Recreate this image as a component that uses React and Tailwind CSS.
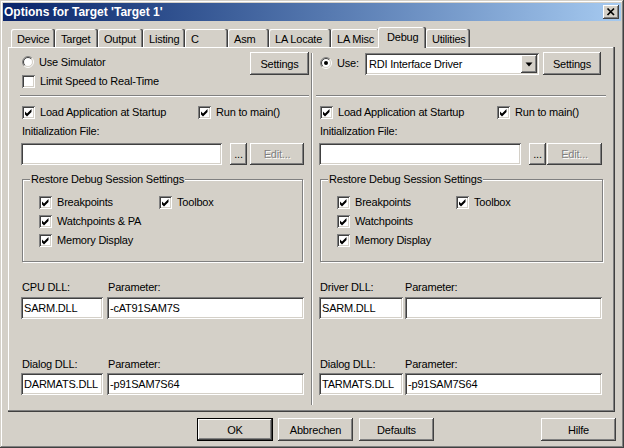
import React from "react";

// Win2000-style 3D edges
const raised =
  "bg-[#d4d0c8] shadow-[inset_-1px_-1px_#404040,inset_1px_1px_#ffffff,inset_-2px_-2px_#808080,inset_2px_2px_#d4d0c8]";
const sunken =
  "shadow-[inset_1px_1px_#808080,inset_-1px_-1px_#ffffff,inset_2px_2px_#404040,inset_-2px_-2px_#d4d0c8]";

function Button({ children, className = "", disabled = false }) {
  return (
    <div className={`${raised} flex items-center justify-center shrink-0 ${className}`}>
      {disabled ? (
        <span className="text-[#808080] [text-shadow:1px_1px_0_#ffffff]">{children}</span>
      ) : (
        children
      )}
    </div>
  );
}

function CheckBox({ label, checked = true, className = "" }) {
  return (
    <div className={`flex items-center h-[16px] ${className}`}>
      <span className={`w-[13px] h-[13px] shrink-0 bg-white ${sunken}`}>
        {checked && (
          <svg width="13" height="13" viewBox="0 0 13 13">
            <path d="M3 5.5 5 7.5 9.5 3v3L5 10.5 3 8.5z" fill="#000" />
          </svg>
        )}
      </span>
      <span className="ml-[5px] whitespace-nowrap">{label}</span>
    </div>
  );
}

function Radio({ checked = false }) {
  return (
    <svg width="12" height="12" viewBox="0 0 12 12" className="shrink-0">
      <circle cx="6" cy="6" r="4.5" fill="#fff" />
      <path d="M2.111 9.889A5.5 5.5 0 0 1 9.889 2.111" stroke="#808080" fill="none" />
      <path d="M9.889 2.111A5.5 5.5 0 0 1 2.111 9.889" stroke="#ffffff" fill="none" />
      <path d="M2.818 9.182A4.5 4.5 0 0 1 9.182 2.818" stroke="#404040" fill="none" />
      <path d="M9.182 2.818A4.5 4.5 0 0 1 2.818 9.182" stroke="#d4d0c8" fill="none" />
      {checked && <circle cx="6" cy="6" r="2" fill="#000" />}
    </svg>
  );
}

function Field({ value = "", className = "" }) {
  return (
    <div className={`bg-white ${sunken} h-[22px] flex items-center px-[3px] shrink-0 whitespace-nowrap overflow-hidden ${className}`}>
      {value}
    </div>
  );
}

function HSep({ className = "" }) {
  return <div className={`h-[2px] border-t border-b border-[#808080] border-b-white ${className}`} />;
}

function Tab({ label, w, active = false }) {
  if (active) {
    return (
      <div
        className={`relative z-10 -ml-[2px] -mb-[1px] h-[21px] bg-[#d4d0c8] rounded-t-[2px] shadow-[inset_-1px_0_#404040,inset_-2px_0_#808080,inset_1px_1px_#ffffff] flex items-center pl-[9px] pb-[2px] ${w}`}
      >
        {label}
      </div>
    );
  }
  return (
    <div
      className={`h-[18px] bg-[#d4d0c8] rounded-t-[2px] shadow-[inset_-1px_0_#404040,inset_-2px_0_#808080,inset_1px_1px_#ffffff] flex items-center pl-[6px] pt-[1px] ${w}`}
    >
      {label}
    </div>
  );
}

function GroupBox({ w, bpW, watch }) {
  return (
    <div className={`mt-[14px] ml-[1px] h-[83px] border border-[#808080] shadow-[inset_1px_1px_#ffffff,1px_1px_#ffffff] flex flex-col ${w}`}>
      <div className="-mt-[8px] ml-[7px] px-[1px] h-[14px] w-fit bg-[#d4d0c8] whitespace-nowrap">
        Restore Debug Session Settings
      </div>
      <div className="pl-[16px] flex flex-col">
        <div className="mt-[8px] flex">
          <CheckBox className={bpW} label="Breakpoints" />
          <CheckBox label="Toolbox" />
        </div>
        <CheckBox className="mt-[3px]" label={watch} />
        <CheckBox className="mt-[3px]" label="Memory Display" />
      </div>
    </div>
  );
}

function Lower({ c }) {
  return (
    <div className={`flex flex-col ${c.pl}`}>
      <div className="mt-[7px] ml-[1px] flex">
        <CheckBox className={c.loadW} label="Load Application at Startup" />
        <CheckBox label="Run to main()" />
      </div>
      <div className="mt-[4px] ml-[1px] h-[14px]">Initialization File:</div>
      <div className="mt-[5px] flex">
        <Field className={c.initW} />
        <Button className="ml-[8px] w-[17px] h-[22px]">...</Button>
        <Button disabled className={`h-[22px] ${c.editC}`}>
          Edit...
        </Button>
      </div>
      <GroupBox w={c.groupW} bpW={c.bpW} watch={c.watch} />
      <div className="mt-[18px] ml-[1px] h-[14px] flex">
        <span className={c.lblW}>{c.dll1}</span>
        <span>Parameter:</span>
      </div>
      <div className="mt-[3px] flex">
        <Field className={c.in1W} value="SARM.DLL" />
        <Field className={`w-[197px] ${c.in2Ml}`} value={c.par1} />
      </div>
      <div className="mt-[38px] ml-[1px] h-[14px] flex">
        <span className={c.lblW}>Dialog DLL:</span>
        <span>Parameter:</span>
      </div>
      <div className="mt-[2px] flex">
        <Field className={`${c.in1W} px-[1px]`} value={c.dlg} />
        <Field className={`w-[197px] ${c.in2Ml}`} value="-p91SAM7S64" />
      </div>
    </div>
  );
}

const leftCfg = {
  pl: "pl-[12px]",
  loadW: "w-[176px]",
  initW: "w-[201px]",
  editC: "ml-[3px] w-[54px]",
  groupW: "w-[281px]",
  bpW: "w-[120px]",
  watch: "Watchpoints & PA",
  lblW: "w-[86px]",
  dll1: "CPU DLL:",
  in1W: "w-[82px]",
  in2Ml: "ml-[4px]",
  par1: "-cAT91SAM7S",
  dlg: "DARMATS.DLL",
};

const rightCfg = {
  pl: "pl-[6px]",
  loadW: "w-[177px]",
  initW: "w-[202px]",
  editC: "ml-[1px] w-[55px]",
  groupW: "w-[283px]",
  bpW: "w-[119px]",
  watch: "Watchpoints",
  lblW: "w-[85px]",
  dll1: "Driver DLL:",
  in1W: "w-[84px]",
  in2Ml: "ml-[2px]",
  par1: "",
  dlg: "TARMATS.DLL",
};

const tabs = [
  ["Device", "w-[44px]"],
  ["Target", "w-[43px]"],
  ["Output", "w-[45px]"],
  ["Listing", "w-[42px]"],
  ["C", "w-[43px]"],
  ["Asm", "w-[41px]"],
  ["LA Locate", "w-[62px]"],
  ["LA Misc", "w-[49px]"],
];

export default function App() {
  return (
    <div className="w-[624px] h-[448px] overflow-hidden bg-[#d4d0c8] text-black text-[11px] leading-[14px] tracking-[-0.2px] font-['Liberation_Sans',Arial,sans-serif] shadow-[inset_-1px_-1px_#404040,inset_1px_1px_#d4d0c8,inset_-2px_-2px_#808080,inset_2px_2px_#ffffff] pt-[3px] flex flex-col">
      {/* Title bar */}
      <div className="mx-[3px] h-[18px] bg-linear-to-r from-[#0a246a] to-[#a6caf0] flex items-center pl-[1px] pr-[2px]">
        <span className="flex-1 text-white font-bold text-[12px] tracking-normal">
          Options for Target 'Target 1'
        </span>
        <Button className="w-[16px] h-[14px]">
          <svg width="16" height="14" viewBox="0 0 16 14">
            <path d="M4.5 3.5 11 10M11 3.5 4.5 10" stroke="#000" strokeWidth="1.7" />
          </svg>
        </Button>
      </div>

      {/* Tabs */}
      <div className="mt-[6px] ml-[11px] h-[20px] flex items-end">
        {tabs.map(([label, w]) => (
          <Tab key={label} label={label} w={w} />
        ))}
        <Tab label="Debug" w="w-[48px]" active />
        <Tab label="Utilities" w="w-[44px]" />
      </div>

      {/* Panel */}
      <div className="ml-[8px] w-[607px] h-[365px] shrink-0 shadow-[inset_-1px_-1px_#404040,inset_-2px_-2px_#808080,inset_1px_1px_#ffffff] pt-[1px] pl-[1px] flex">
        {/* Left column */}
        <div className="w-[302px] flex flex-col">
          <div className="h-[47px] flex pl-[13px] pr-[2px]">
            <div className="flex-1 flex flex-col">
              <div className="mt-[6px] h-[16px] flex items-center">
                <Radio />
                <span className="ml-[5px]">Use Simulator</span>
              </div>
              <CheckBox className="mt-[3px]" checked={false} label="Limit Speed to Real-Time" />
            </div>
            <Button className="mt-[4px] w-[59px] h-[23px]">Settings</Button>
          </div>
          <HSep className="ml-[11px] mr-[2px]" />
          <Lower c={leftCfg} />
        </div>

        {/* Divider */}
        <div className="w-[2px] mt-[5px] mb-[7px] border-l border-r border-[#808080] border-r-white" />

        {/* Right column */}
        <div className="w-[300px] flex flex-col">
          <div className="h-[47px] flex items-start pl-[7px]">
            <div className="mt-[4px] h-[22px] w-[45px] flex items-center">
              <Radio checked />
              <span className="ml-[5px]">Use:</span>
            </div>
            <div className={`mt-[5px] w-[174px] h-[22px] bg-white ${sunken} flex items-center pl-[4px] pr-[2px]`}>
              <span className="flex-1 whitespace-nowrap">RDI Interface Driver</span>
              <Button className="w-[16px] h-[18px]">
                <svg width="8" height="5" viewBox="0 0 8 5">
                  <path d="M0.5 0.5h7L4 4.5z" fill="#000" />
                </svg>
              </Button>
            </div>
            <Button className="mt-[4px] ml-[4px] w-[58px] h-[23px]">Settings</Button>
          </div>
          <HSep className="ml-[3px] mr-[7px]" />
          <Lower c={rightCfg} />
        </div>
      </div>

      {/* Dialog buttons */}
      <div className="mt-[6px] ml-[197px] flex">
        <Button className="w-[76px] h-[23px] shadow-[inset_0_0_0_1px_#000000,inset_-2px_-2px_#404040,inset_2px_2px_#ffffff,inset_-3px_-3px_#808080]">
          OK
        </Button>
        <Button className="ml-[5px] w-[75px] h-[23px]">Abbrechen</Button>
        <Button className="ml-[6px] w-[75px] h-[23px]">Defaults</Button>
        <Button className="ml-[107px] w-[75px] h-[23px]">Hilfe</Button>
      </div>
    </div>
  );
}
